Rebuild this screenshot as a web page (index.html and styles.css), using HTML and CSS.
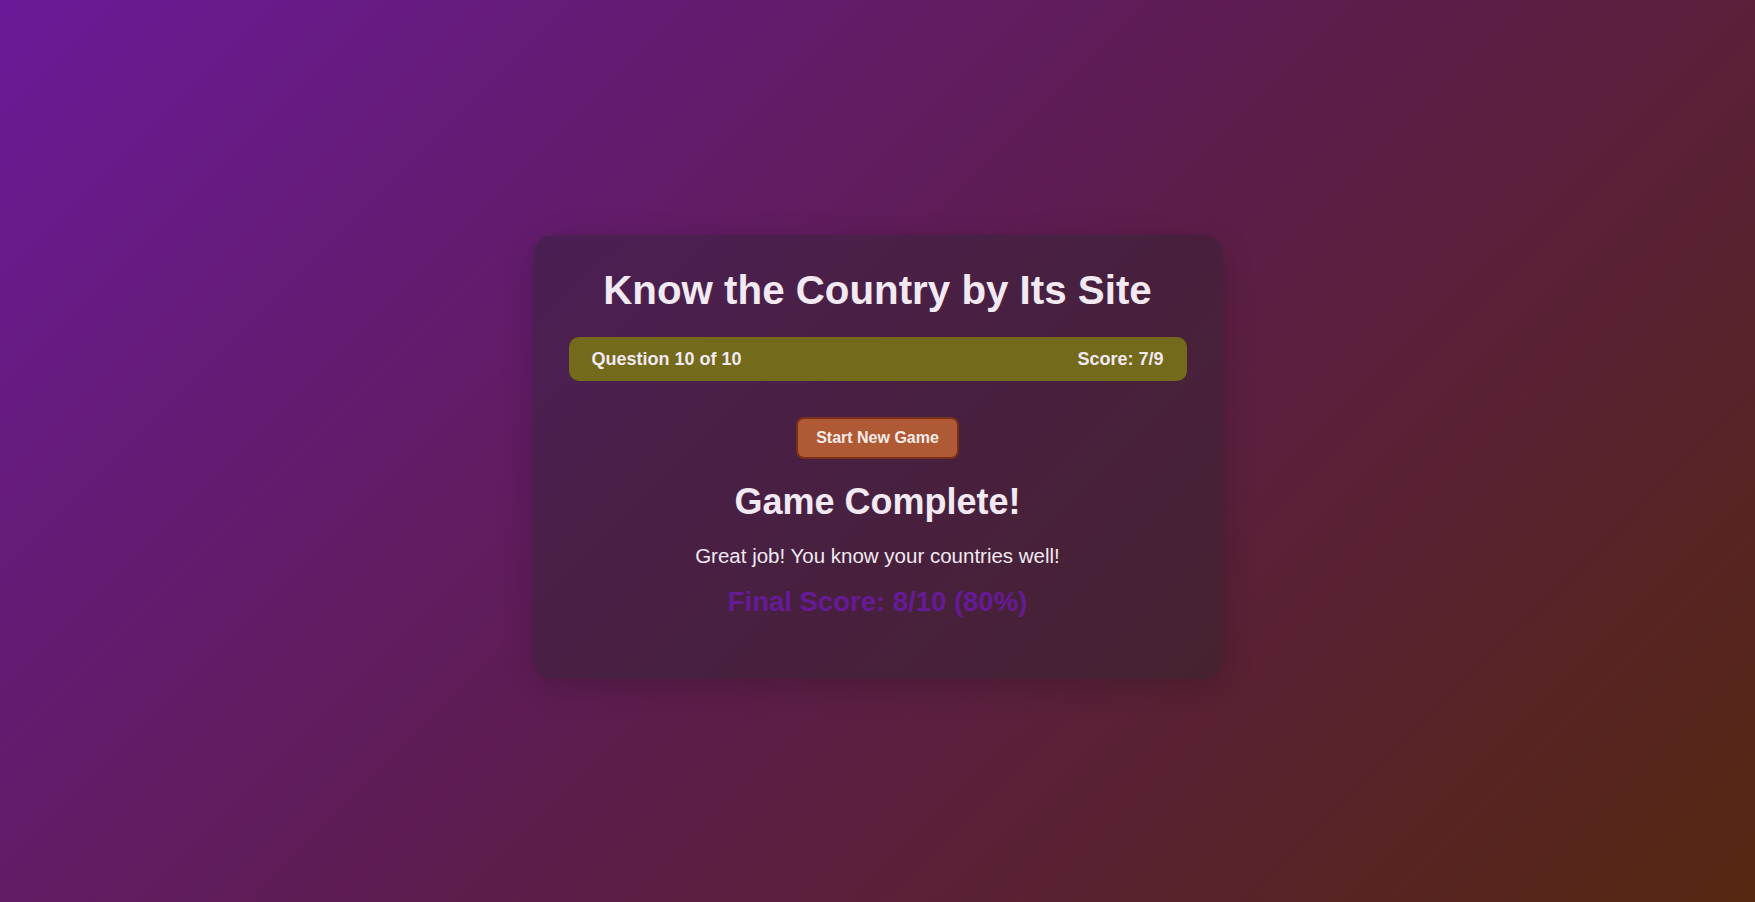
FILE: index.html
```html
<!DOCTYPE html>
<html lang="en">
<head>
<meta charset="utf-8">
<title>Know the Country by Its Site</title>
<link rel="stylesheet" href="styles.css">
</head>
<body>
<main class="page">
  <section class="card">
    <h1 class="title">Know the Country by Its Site</h1>
    <div class="status-bar">
      <span class="status-item">Question 10 of 10</span>
      <span class="status-item">Score: 7/9</span>
    </div>
    <button class="new-game" type="button">Start New Game</button>
    <div class="result">
      <h2 class="result-title">Game Complete!</h2>
      <p class="result-message">Great job! You know your countries well!</p>
      <p class="final-score">Final Score: 8/10 (80%)</p>
    </div>
  </section>
</main>
</body>
</html>
```

FILE: styles.css
```css
* {
  box-sizing: border-box;
}

html, body {
  margin: 0;
  padding: 0;
  height: 100%;
}

body {
  font-family: "Liberation Sans", Arial, sans-serif;
  color: #f2e9f2;
  background: linear-gradient(135deg, #6b1a98 0%, #5d1d4e 50%, #552710 100%);
  min-height: 100vh;
}

.page {
  min-height: 100vh;
  display: flex;
  justify-content: center;
  padding-top: 235px;
}

.card {
  width: 690px;
  height: 444px;
  background: rgba(40, 36, 44, 0.38);
  border-radius: 20px;
  box-shadow: 0 8px 32px rgba(0, 0, 0, 0.18);
  padding: 33px 36px 50px;
  display: flex;
  flex-direction: column;
  align-items: center;
}

.title {
  margin: 0;
  font-size: 40.3px;
  line-height: 46px;
  font-weight: 700;
  text-align: center;
}

.status-bar {
  align-self: stretch;
  margin-top: 23px;
  height: 44px;
  padding: 0 23px;
  background: #736a1c;
  border-radius: 10px;
  display: flex;
  justify-content: space-between;
  align-items: center;
  font-size: 18px;
  font-weight: 700;
}

.new-game {
  margin-top: 36px;
  font-family: "Liberation Sans", Arial, sans-serif;
  font-size: 16px;
  font-weight: 700;
  line-height: 18px;
  color: #f5ece8;
  background: #b05a35;
  border: 2px solid #7a2f19;
  border-radius: 8px;
  padding: 10px 18px;
  cursor: pointer;
}

.result {
  display: flex;
  flex-direction: column;
  align-items: center;
  margin-top: 22px;
}

.result-title {
  margin: 0;
  font-size: 36px;
  line-height: 41px;
  font-weight: 700;
}

.result-message {
  margin: 22px 0 0;
  font-size: 20.5px;
  line-height: 24px;
}

.final-score {
  margin: 18px 0 0;
  font-size: 27.5px;
  line-height: 32px;
  font-weight: 700;
  color: #661a96;
}
```
